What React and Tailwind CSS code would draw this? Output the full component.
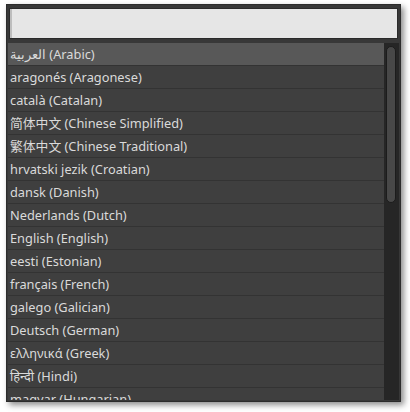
import React from "react";

const languages = [
  "العربية (Arabic)",
  "aragonés (Aragonese)",
  "català (Catalan)",
  "简体中文 (Chinese Simplified)",
  "繁体中文 (Chinese Traditional)",
  "hrvatski jezik (Croatian)",
  "dansk (Danish)",
  "Nederlands (Dutch)",
  "English (English)",
  "eesti (Estonian)",
  "français (French)",
  "galego (Galician)",
  "Deutsch (German)",
  "ελληνικά (Greek)",
  "हिन्दी (Hindi)",
  "magyar (Hungarian)",
];

export default function App() {
  return (
    <div className="w-[410px] h-[412px] bg-white overflow-hidden pt-[4px] pl-[6px]">
      <div className="w-[395px] h-[398px] bg-[#383838] border border-[#2c2c2c] shadow-[3px_3px_6px_rgba(0,0,0,0.45)] flex flex-col pt-[3px] px-[1px] pb-[1px] gap-[4px]">
        <input
          className="h-[31px] shrink-0 mx-[1px] bg-[#e6e6e6] border border-[#2a2a2a] shadow-[inset_2px_0_0_#bdbdbd] outline-none"
          type="text"
        />
        <div className="flex-1 flex overflow-hidden">
          <ul
            className="flex-1 overflow-hidden text-[12.8px] text-[#dadada]"
            style={{ fontFamily: '"Noto Sans", "Noto Sans CJK SC", sans-serif' }}
          >
            {languages.map((lang, i) => (
              <li
                key={lang}
                className={`h-[23px] pl-[2px] pt-[2px] flex items-center border-b border-[#333333] whitespace-nowrap ${
                  i === 0 ? "bg-[#585858]" : "bg-[#3f3f3f]"
                }`}
              >
                {lang}
              </li>
            ))}
          </ul>
          <div className="w-[15px] bg-[#262626] pt-[3px] px-[2px]">
            <div className="h-[157px] w-[10px] rounded-full bg-[#484848] border border-[#1c1c1c]" />
          </div>
        </div>
      </div>
    </div>
  );
}
